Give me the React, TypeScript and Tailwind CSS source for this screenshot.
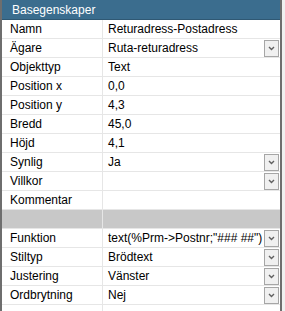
import React from "react";

type Row = { label: string; value: string; dropdown?: boolean };

const rows: Row[] = [
  { label: "Namn", value: "Returadress-Postadress" },
  { label: "Ägare", value: "Ruta-returadress", dropdown: true },
  { label: "Objekttyp", value: "Text" },
  { label: "Position x", value: "0,0" },
  { label: "Position y", value: "4,3" },
  { label: "Bredd", value: "45,0" },
  { label: "Höjd", value: "4,1" },
  { label: "Synlig", value: "Ja", dropdown: true },
  { label: "Villkor", value: "", dropdown: true },
  { label: "Kommentar", value: "" },
];

const rows2: Row[] = [
  { label: "Funktion", value: 'text(%Prm->Postnr;"### ##")', dropdown: true },
  { label: "Stiltyp", value: "Brödtext", dropdown: true },
  { label: "Justering", value: "Vänster", dropdown: true },
  { label: "Ordbrytning", value: "Nej", dropdown: true },
  { label: "", value: "" },
];

function DropButton() {
  return (
    <div className="w-[15px] h-[17px] mr-[1px] border border-[#a6a6a6] bg-[#f0f0f0] flex items-center justify-center shrink-0">
      <svg width="7" height="5" viewBox="0 0 7 5">
        <polyline points="1,1 3.5,3.5 6,1" fill="none" stroke="#606060" strokeWidth="1.4" />
      </svg>
    </div>
  );
}

function PropRow({ row }: { row: Row }) {
  return (
    <div className="grid grid-cols-[101px_1fr] h-[19px] border-b border-[#e6e6e6]">
      <div className="pl-[8px] border-r border-[#e6e6e6] flex items-center whitespace-nowrap overflow-hidden">
        {row.label}
      </div>
      <div className="pl-[5px] flex items-center justify-between whitespace-nowrap overflow-hidden">
        <span>{row.value}</span>
        {row.dropdown && <DropButton />}
      </div>
    </div>
  );
}

export default function App() {
  return (
    <div
      className="w-[285px] h-[311px] bg-[#f0f0f0] overflow-hidden text-[12px] text-black"
      style={{ fontFamily: '"Liberation Sans", Arial, sans-serif' }}
    >
      <div className="w-[282px] h-full bg-white border-l-2 border-r-2 border-[#6e6e6e]">
        <div className="h-[20px] bg-[#3b6d8e] text-white pl-[10px] flex items-center border-b border-[#2f5873]">
          Basegenskaper
        </div>
        {rows.map((r, i) => (
          <PropRow key={i} row={r} />
        ))}
        <div className="grid grid-cols-[101px_1fr] h-[19px] bg-[#c8c8c8] border-b border-[#e6e6e6]">
          <div className="border-r border-[#e6e6e6]" />
          <div />
        </div>
        {rows2.map((r, i) => (
          <PropRow key={i} row={r} />
        ))}
      </div>
    </div>
  );
}
